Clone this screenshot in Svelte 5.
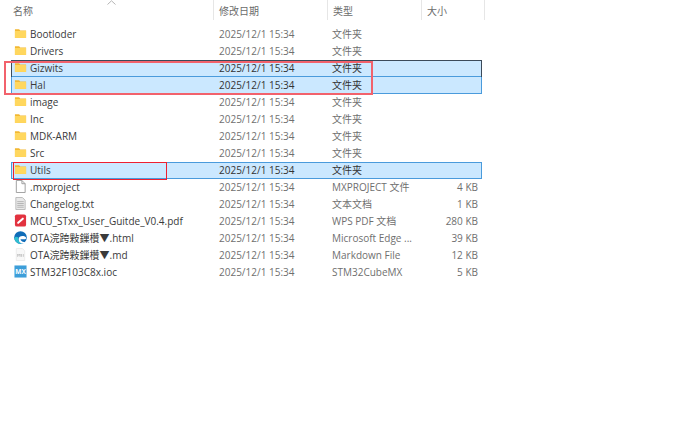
<script>
  const folders = [
    { name: 'Bootloder' },
    { name: 'Drivers' },
    { name: 'Gizwits', sel: 'focus' },
    { name: 'Hal', sel: 'on' },
    { name: 'image' },
    { name: 'Inc' },
    { name: 'MDK-ARM' },
    { name: 'Src' },
    { name: 'Utils', sel: 'on' }
  ].map((f) => ({ ...f, icon: 'folder', type: '文件夹', size: '' }));
  const files = [
    { name: '.mxproject', icon: 'blank', type: 'MXPROJECT 文件', size: '4 KB' },
    { name: 'Changelog.txt', icon: 'txt', type: '文本文档', size: '1 KB' },
    { name: 'MCU_STxx_User_Guitde_V0.4.pdf', icon: 'pdf', type: 'WPS PDF 文档', size: '280 KB' },
    { name: 'OTA浣跨敤鏁欑▼.html', icon: 'edge', type: 'Microsoft Edge ...', size: '39 KB' },
    { name: 'OTA浣跨敤鏁欑▼.md', icon: 'md', type: 'Markdown File', size: '12 KB' },
    { name: 'STM32F103C8x.ioc', icon: 'mx', type: 'STM32CubeMX', size: '5 KB' }
  ];
  const rows = [...folders, ...files];
</script>

<div class="page">
  <header class="head">
    <div class="hc name">名称<svg class="sort" width="9" height="5" viewBox="0 0 9 5"><path d="M.5 4.500 4.500.8l4 3.700" fill="none" stroke="#b5b5b5" /></svg></div>
    <div class="hc date">修改日期</div>
    <div class="hc kind">类型</div>
    <div class="hc size">大小</div>
  </header>

  <div class="list">
    {#each rows as r}
      <div class="row {r.sel ?? ''}">
        <div class="cname">
          <svg class="ic" width="14" height="14" viewBox="0 0 14 14">
            {#if r.icon === 'folder'}
              <path d="M1 2.500h4.500l1.200 1.300H13v8H1z" fill="#f2b833" />
              <path d="M1 4.300h12v7.500H1z" fill="#ffd75e" />
            {:else if r.icon === 'blank'}
              <path d="M2.500.5h6l3.500 3.500v9.500H2.500z" fill="#fff" stroke="#9a9a9a" />
              <path d="M8.500.5V4H12" fill="none" stroke="#9a9a9a" />
            {:else if r.icon === 'txt'}
              <path d="M2 .5h7L12 3.500V13.500H2z" fill="#e9e9e9" stroke="#b8b8b8" />
              <path d="M3.500 5h7M3.500 7h7M3.500 9h7M3.500 11h7" stroke="#b0b0b0" />
            {:else if r.icon === 'pdf'}
              <rect x="1" y=".5" width="12" height="13" rx="2" fill="#e2323f" />
              <path d="M4.500 9.500 9.500 5" stroke="#fff" stroke-width="2.200" stroke-linecap="round" />
            {:else if r.icon === 'edge'}
              <circle cx="7" cy="7" r="6.800" fill="#0f6cb8" />
              <path d="M.3 7.500C1 12 5 14.200 8.500 13.700 5.500 12.800 3.800 10 4.800 7 3 5.800 1.200 6 .3 7.500z" fill="#2fc0d0" />
              <path d="M5 8.500c0-3 5-4.500 8-1.500.5 1.200-.5 2-2 2H7c0 2 3 3.500 5.500 2.500C10.500 14 8 13.800 6.500 12.500 5.500 11.500 5 10 5 8.500z" fill="#fff" />
            {:else if r.icon === 'md'}
              <path d="M2.500.5h6.500l2.500 2.500V13.500H2.500z" fill="#f8f8f8" stroke="#ececec" />
              <path d="M4 9.500V6.500L5.300 8 6.500 6.500v3M8 6.500v3M10 6.500v3" fill="none" stroke="#b4b4b4" stroke-width=".8" />
            {:else}
              <rect x=".5" y=".5" width="13" height="13" fill="#3d9ed9" />
              <text x="7" y="9.800" class="mx">MX</text>
            {/if}
          </svg>
          <span>{r.name}</span>
        </div>
        <div class="cdate">2025/12/1 15:34</div>
        <div class="ckind">{r.type}</div>
        <div class="csize">{r.size}</div>
      </div>
    {/each}
  </div>

  <div class="mark m1"></div>
  <div class="mark m2"></div>
</div>

<style>
  :global(body) {
    margin: 0;
    background: #fff;
  }
  .page {
    position: relative;
    width: 692px;
    height: 441px;
    overflow: hidden;
    background: #fff;
    font-family: "Open Sans", "Noto Sans CJK SC", sans-serif;
    font-size: 10px;
    color: #4a4a4a;
  }
  .head {
    display: grid;
    grid-template-columns: 214px 114px 94px 63px;
    height: 20px;
    color: #6b6b6b;
  }
  .hc {
    position: relative;
    display: flex;
    align-items: center;
    padding-left: 5px;
    border-right: 1px solid #e6e6e6;
    box-sizing: border-box;
  }
  .name {
    padding-left: 13px;
  }
  .sort {
    position: absolute;
    left: 107px;
    top: 0;
  }
  .list {
    display: flex;
    flex-direction: column;
    margin: 6px 0 0 11px;
    width: 471px;
  }
  .row {
    display: grid;
    grid-template-columns: 203px 113px 94px 60px;
    align-items: center;
    height: 17px;
    padding-bottom: 2px;
    box-sizing: border-box;
    color: #6f6f6f;
  }
  .row.on,
  .row.focus {
    background: #cbe8ff;
    color: #333;
    box-shadow: inset 0 0 0 1px #4a9bdc;
  }
  .row.focus {
    box-shadow: inset 0 1px 0 #3b4a5a, inset 1px 0 0 #3b4a5a, inset -1px 0 0 #3b4a5a, inset 0 -1px 0 #4a9bdc;
  }
  .row.focus + .row.on {
    box-shadow: inset 1px 0 0 #4a9bdc, inset -1px 0 0 #4a9bdc, inset 0 -1px 0 #4a9bdc;
  }
  .cname {
    display: flex;
    align-items: center;
    gap: 3px;
    padding-left: 3px;
    color: #3a3a3a;
    white-space: nowrap;
  }
  .cdate {
    padding-left: 5px;
  }
  .ckind {
    padding-left: 5px;
    white-space: nowrap;
  }
  .csize {
    text-align: right;
    padding-right: 3px;
  }
  .ic {
    flex: none;
    width: 13px;
    height: 13px;
  }
  .mx {
    font-size: 7px;
    font-weight: 700;
    fill: #fff;
    text-anchor: middle;
  }
  .mark {
    position: absolute;
    box-sizing: border-box;
    pointer-events: none;
  }
  .m1 {
    left: 4px;
    top: 61px;
    width: 369px;
    height: 34px;
    border: 2px solid #f2626c;
  }
  .m2 {
    left: 13px;
    top: 162px;
    width: 154px;
    height: 18px;
    border: 1px solid #ee2030;
  }
</style>
